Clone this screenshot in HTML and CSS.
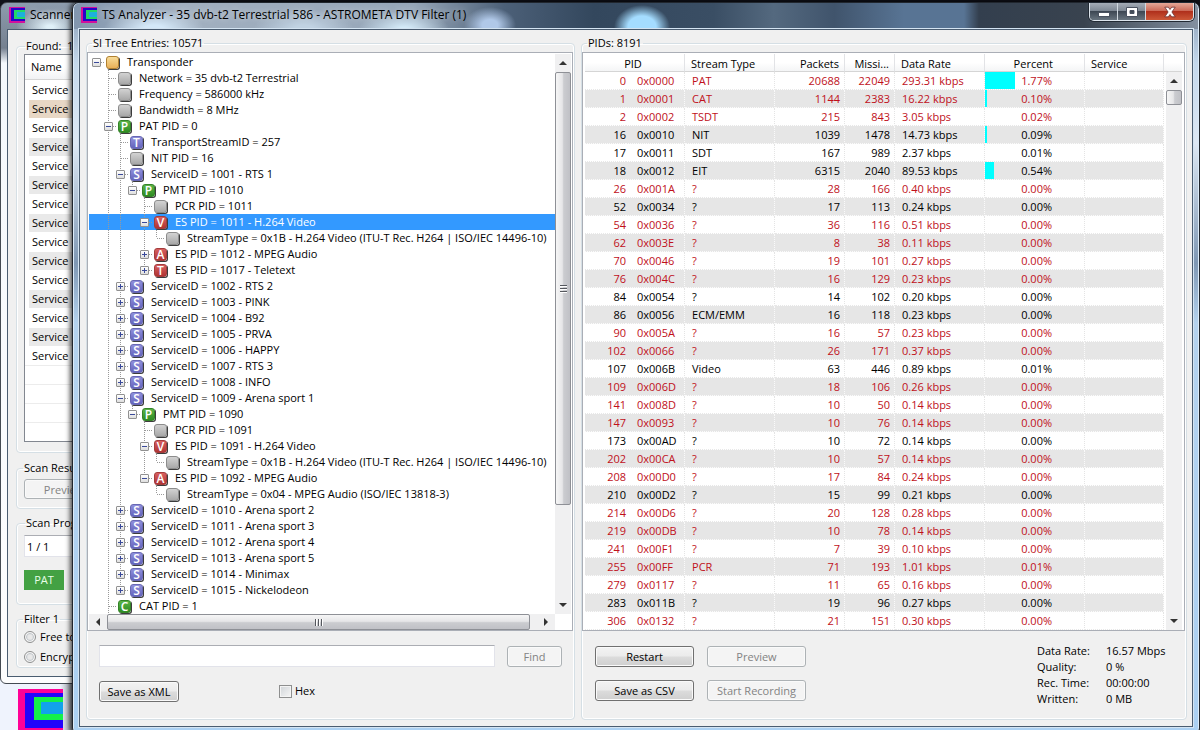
FILE: index.html
```html
<!DOCTYPE html>
<html lang="en">
<head>
<meta charset="utf-8">
<title>TS Analyzer</title>
<link rel="stylesheet" href="styles.css">
</head>
<body>
<div class="desktop">
  <svg class="desk-icon" viewBox="0 0 45 41" aria-hidden="true">
    <rect width="45" height="41" fill="#ff0096"/>
    <rect x="7" y="4" width="38" height="35" fill="#2204fb"/>
    <rect x="16" y="8" width="29" height="23" fill="#14f04a"/>
    <rect x="23" y="13" width="22" height="12" fill="#12a2ea"/>
  </svg>

  <section class="window scanner">
    <header class="titlebar">
      <svg class="app-icon" viewBox="0 0 16 16" aria-hidden="true"><rect width="16" height="16" fill="#d4109c"/><rect x="2" y="1" width="14" height="13" fill="#2408c8"/><rect x="5" y="3" width="11" height="9" fill="#20d868"/><rect x="8" y="5" width="8" height="5" fill="#1cb0dc"/></svg>
      <h2 class="title">Scanner</h2>
    </header>
    <div class="client">
      <fieldset class="group">
        <legend class="indent">Found: &nbsp;1</legend>
        <table class="found">
          <thead><tr><th>Name</th></tr></thead>
          <tbody id="found"></tbody>
        </table>
      </fieldset>
      <fieldset class="group results">
        <legend>Scan Results</legend>
        <button class="btn" disabled>Preview</button>
      </fieldset>
      <fieldset class="group progress">
        <legend class="indent">Scan Progress</legend>
        <input class="text-input" aria-label="Scan progress" value="1 / 1" readonly>
        <span class="pat">PAT</span>
      </fieldset>
      <fieldset class="group filter">
        <legend>Filter 1</legend>
        <label><input type="radio" name="filter">Free to air</label>
        <label><input type="radio" name="filter">Encrypted</label>
      </fieldset>
    </div>
  </section>

  <main class="window analyzer">
    <header class="titlebar">
      <svg class="app-icon" viewBox="0 0 16 16" aria-hidden="true"><rect width="16" height="16" fill="#d4109c"/><rect x="2" y="1" width="14" height="13" fill="#2408c8"/><rect x="5" y="3" width="11" height="9" fill="#20d868"/><rect x="8" y="5" width="8" height="5" fill="#1cb0dc"/></svg>
      <h1 class="title">TS Analyzer - 35 dvb-t2 Terrestrial 586 - ASTROMETA DTV Filter (1)</h1>
      <div class="caption">
        <button class="cap" aria-label="Minimize"><svg viewBox="0 0 12 12"><rect x=".5" y="6.500" width="11" height="4" fill="#fff" stroke="#4a5260"/></svg></button>
        <button class="cap" aria-label="Maximize"><svg viewBox="0 0 12 12"><path d="M.5 1.500h11v9H.5zM4 4.500v3h4v-3z" fill="#fff" fill-rule="evenodd" stroke="#4a5260"/></svg></button>
        <button class="cap close" aria-label="Close"><svg viewBox="0 0 12 12"><path d="M.8 1.200h3.500L6 3.500l1.700-2.300h3.500L7.900 6l3.300 4.800H7.700L6 8.500l-1.700 2.300H.8L4.100 6z" fill="#fff" stroke="#6b3030" stroke-width=".8"/></svg></button>
      </div>
    </header>
    <div class="client panes">
      <fieldset class="group">
        <legend>SI Tree Entries: 10571</legend>
        <div class="box tree-box">
          <div class="tree-main">
            <ul class="tree" id="tree"></ul>
            <div class="hbar">
              <span class="arrow left"></span><span class="thumb"><i class="grip"></i></span><span class="rest"></span><span class="arrow right"></span>
            </div>
          </div>
          <div class="vbar tree-scroll">
            <span class="arrow up"></span><span class="thumb"><i class="grip"></i></span><span class="rest"></span><span class="arrow down"></span>
          </div>
        </div>
        <div class="controls">
          <div class="row">
            <input class="text-input grow" aria-label="Find text">
            <button class="btn find" disabled>Find</button>
          </div>
          <div class="row second">
            <button class="btn save">Save as XML</button>
            <label class="hex"><input type="checkbox">Hex</label>
          </div>
        </div>
      </fieldset>

      <fieldset class="group">
        <legend>PIDs: 8191</legend>
        <div class="box pid-box">
          <table class="pids">
            <colgroup><col class="c-num"><col class="c-hex"><col class="c-type"><col class="c-pack"><col class="c-miss"><col class="c-rate"><col class="c-pct"><col></colgroup>
            <thead><tr><th colspan="2" class="mid">PID</th><th>Stream Type</th><th class="num">Packets</th><th class="num">Missi...</th><th>Data Rate</th><th class="pct">Percent</th><th>Service</th></tr></thead>
            <tbody id="pids"></tbody>
          </table>
          <div class="pid-side">
            <span class="filler"></span>
            <div class="vbar">
              <span class="arrow up"></span><span class="thumb small"></span><span class="rest"></span><span class="arrow down"></span>
            </div>
          </div>
        </div>
        <div class="controls split">
          <div class="buttons">
            <button class="btn">Restart</button>
            <button class="btn" disabled>Preview</button>
            <button class="btn">Save as CSV</button>
            <button class="btn" disabled>Start Recording</button>
          </div>
          <dl class="stats">
            <dt>Data Rate:</dt><dd>16.57 Mbps</dd>
            <dt>Quality:</dt><dd>0 %</dd>
            <dt>Rec. Time:</dt><dd>00:00:00</dd>
            <dt>Written:</dt><dd>0 MB</dd>
          </dl>
        </div>
      </fieldset>
    </div>
  </main>
</div>
<script src="app.js"></script>
</body>
</html>
```
FILE: styles.css
```css
* { box-sizing: border-box; }

body {
  margin: 0;
  font: 11px/16px "Open Sans", "Noto Sans", sans-serif;
  color: #000;
}

button, input { font: inherit; color: inherit; margin: 0; }
h1, h2, ul, dl, dd { margin: 0; padding: 0; }

.desktop {
  position: relative;
  min-height: 100vh;
  overflow: hidden;
  background: linear-gradient(#10121a 0 8px, #66686c 8px);
}
.desktop::before {
  content: "";
  position: absolute;
  left: 0;
  top: 30px;
  bottom: 0;
  width: 76px;
  background: linear-gradient(90deg, #eff3fd 0 60px, #8f949c 73px);
}
.desk-icon { position: absolute; left: 18px; top: 689px; width: 45px; height: 41px; }

/* Windows */
.window {
  position: absolute;
  border: 1px solid #20262e;
  border-radius: 7px 7px 6px 6px;
  padding: 0 6px 6px;
}
.analyzer {
  left: 72px;
  top: 2px;
  right: 0;
  background: linear-gradient(#8498b0, #c4d8ec 60px, #dde8f4 140px, #7f98b4 260px, #b4d2ee 320px, #abd0f2);
  box-shadow: inset 0 0 0 1px #dcebf8, -1px 0 5px 1px rgba(0, 0, 0, .7);
}
.scanner {
  left: 0;
  top: 2px;
  width: 82px;
  overflow: hidden;
  border-color: #444a52;
  background: linear-gradient(#8d9cae, #75808f 45px, #f4f8fc 60px, #fdfdfe);
}

.titlebar { display: flex; align-items: center; height: 26px; margin: 0 -5px; padding: 0 0 2px 5px; }
.analyzer .titlebar {
  border-radius: 6px 6px 0 0;
  background:
    radial-gradient(ellipse 28px 22px at 568px 24px, #a4dcff 50%, transparent),
    radial-gradient(ellipse 26px 18px at 416px 22px, #b0c8e8 30%, transparent),
    radial-gradient(ellipse 45px 18px at 330px 26px, #d4eaf8 10%, transparent),
    radial-gradient(ellipse 50px 20px at 230px 26px, #c0d2e2 20%, transparent),
    radial-gradient(ellipse 50px 20px at 80px 26px, #d4e8f8 20%, transparent),
    linear-gradient(90deg, #8296ae, #a2b0c0 100px, #96a6b8 340px, #4c6078 430px, #33475d 520px, #3a4e64 640px, #54697f 700px, #40546c 760px, #587494 830px, #587494 890px, #333f4e 905px, #39434f 1010px, #8390a0);
}
.scanner .titlebar { background: radial-gradient(ellipse 34px 18px at 48px 24px, #dff0f8 10%, transparent); }
.app-icon { width: 16px; height: 16px; margin: 0 5px 0 2px; }
.title { font-size: 12px; line-height: 20px; font-weight: 400; white-space: nowrap; text-shadow: 0 0 6px rgba(255, 255, 255, .6); }

.caption { display: flex; align-self: flex-start; margin-left: auto; margin-right: 4px; border: 1px solid #dce4ec; border-top: 0; border-radius: 0 0 5px 5px; box-shadow: 0 0 0 1px #222a34; overflow: hidden; }
.cap { width: 28px; height: 17px; padding: 0; border: 0; border-right: 1px solid #d0d8e0; background: linear-gradient(#a4acb6, #7e8894 45%, #3e4854 50%, #68747f); }
.cap svg { display: block; width: 12px; height: 12px; margin: 1px auto 0; }
.cap.close { width: 47px; border: 0; background: linear-gradient(#e4a898, #cc6a58 45%, #b0301c 50%, #cc5838); }

.client { background: #f0f0f0; border: 1px solid #4a5c70; }
.analyzer .client { box-shadow: 0 0 0 1px #d4e4f2; }
.panes { display: grid; grid-template-columns: 489fr 606fr; gap: 6px; padding: 5px 5px 6px 6px; }

.group { min-width: 0; margin: 0; padding: 0; border: 1px solid #d5dfe5; border-radius: 4px; box-shadow: inset 0 0 0 1px #fff; }
legend { height: 16px; padding: 0 1px; margin-left: 5px; white-space: nowrap; }

.box { display: flex; background: #fff; border: 1px solid #aaaeb6; padding: 1px 1px 0; }

/* Tree */
.tree-box { margin-top: 1px; margin-right: 1px; }
.tree-main { flex: 1; min-width: 0; display: flex; flex-direction: column; }
.tree { overflow: hidden; list-style: none; }
.tree li { display: flex; align-items: center; height: 16px; padding-left: 1px; white-space: nowrap; }
.tree li.selected { background: #3399ff; color: #fff; }
.guide { position: relative; flex: none; width: 12px; height: 16px; }
.guide.line, .guide.half { background: repeating-linear-gradient(#999 0 1px, transparent 1px 2px) 6px 0 / 1px 100% no-repeat; }
.guide.half { background-size: 1px 8px; }
.guide.stub::after { content: ""; position: absolute; left: 7px; top: 8px; width: 7px; border-top: 1px dotted #999; }
.toggle {
  position: absolute;
  left: 2px;
  top: 4px;
  z-index: 1;
  width: 9px;
  height: 9px;
  padding: 0;
  border: 1px solid #919191;
  border-radius: 1px;
  background: linear-gradient(#3a4a9a, #3a4a9a) 1px 3px / 5px 1px no-repeat, linear-gradient(#fff, #dedede);
}
.toggle.plus { background: linear-gradient(#3a4a9a, #3a4a9a) 1px 3px / 5px 1px no-repeat, linear-gradient(#3a4a9a, #3a4a9a) 3px 1px / 1px 5px no-repeat, linear-gradient(#fff, #dedede); }
.icon {
  flex: none;
  width: 13px;
  height: 13px;
  margin: 0 8px 0 4px;
  border: 1px solid #8c8c8c;
  border-radius: 3px;
  box-shadow: 1px 1px 0 #3c3c3c;
  background: linear-gradient(#d2d2d2, #a8a8a8);
  color: #fff;
  font-size: 12px;
  font-weight: 600;
  line-height: 11px;
  text-align: center;
}
.icon.root { background: linear-gradient(#f8dc98, #e8b058); border-color: #b08030; }
.icon.p, .icon.c { background: linear-gradient(#5cb448, #2f8c22); border-color: #348428; }
.icon.s, .icon.t { background: linear-gradient(#9090dc, #6464bc); border-color: #6868b4; }
.icon.r { background: linear-gradient(#d86060, #b03434); border-color: #a43c3c; }

/* Scrollbars */
.vbar { display: flex; flex-direction: column; width: 16px; background: #f0f0f1; }
.tree-scroll { margin-bottom: 16px; }
.hbar { display: flex; height: 16px; background: #f0f0f1; }
.thumb { display: flex; align-items: center; justify-content: center; border: 1px solid #8e9096; border-radius: 2px; background: linear-gradient(90deg, #f6f6f6, #e6e6e8 45%, #cbccd0 55%, #c0c1c6); }
.vbar .thumb { flex: 432; }
.vbar .rest { flex: 91; }
.hbar .thumb { flex: 423; background: linear-gradient(#f6f6f6, #e6e6e8 45%, #cbccd0 55%, #c0c1c6); }
.hbar .rest { flex: 7; }
.vbar .thumb.small { flex: none; height: 15px; }
.grip { width: 7px; height: 8px; background: repeating-linear-gradient(#55585e 0 1px, #fff 1px 2px, transparent 2px 3px); }
.hbar .grip { width: 8px; height: 7px; background: repeating-linear-gradient(90deg, #55585e 0 1px, #fff 1px 2px, transparent 2px 3px); }
.arrow { flex: none; display: grid; place-items: center; width: 16px; height: 18px; }
.hbar .arrow { width: 18px; height: 16px; }
.arrow::before { content: ""; border: 4px solid transparent; }
.arrow.up::before { border-top: 0; border-bottom-color: #333; }
.arrow.down::before { border-bottom: 0; border-top-color: #333; }
.arrow.left::before { border-left: 0; border-right-color: #333; }
.arrow.right::before { border-right: 0; border-left-color: #333; }

/* PID table */
.pid-box { margin: 1px 1px 0 0; padding-left: 2px; padding-right: 2px; }
.pids { flex: 1; width: 0; table-layout: fixed; border-collapse: separate; border-spacing: 0; }
.c-num { width: 41px; }
.c-hex { width: 59px; }
.c-type, .c-rate { width: 90px; }
.c-pack { width: 70px; }
.c-miss { width: 50px; }
.c-pct { width: 100px; }
.pids th { height: 18px; padding: 2px 6px 0; font-weight: 400; line-height: 15px; text-align: left; white-space: nowrap; border-right: 1px solid #e2e3e6; border-bottom: 1px solid #d5d5d5; background: linear-gradient(#fff 50%, #f4f5f6); }
.pids th.num { padding-left: 0; padding-right: 5px; text-align: right; }
.pids th.mid { padding-right: 9px; text-align: center; }
.pids th.pct { padding-right: 31px; text-align: right; }
.pids td { height: 18px; padding: 0 7px; line-height: 17px; border-right: 1px dotted #e4e4e4; border-bottom: 1px dotted #e8e8e8; white-space: nowrap; }
.pids tbody tr:nth-child(even) td { background: #e6e6e6; border-color: #fafafa; }
.pids td.dec { padding: 0; text-align: right; border-right: 0; }
.pids td.hexa { padding-left: 11px; padding-right: 0; }
.pids td.num { padding: 0 4px 0 0; text-align: right; }
.pids td.pct { padding: 0 32px 0 0; text-align: right; }
.pids tr.bad { color: #c0101a; }
.bar { float: left; height: 17px; background: #00ffff; }
.pid-side { display: flex; flex-direction: column; width: 18px; padding-left: 2px; }
.filler { height: 18px; margin-left: -2px; border-bottom: 1px solid #d5d5d5; background: linear-gradient(#fff 50%, #f4f5f6); }
.pid-side .vbar { flex: 1; }
.pid-side .rest { flex: 1; }

/* Controls */
.controls { padding: 14px 12px 12px; }
.row { display: flex; gap: 12px; align-items: center; height: 22px; }
.row.second { margin-top: 13px; }
.text-input { height: 22px; padding: 0 4px; border: 1px solid #e2e3ea; border-top-color: #abadb3; background: #fff; }
.grow { flex: 1; min-width: 0; }
.btn { height: 21px; padding: 0 6px; border: 1px solid #707070; border-radius: 3px; background: linear-gradient(#f3f3f3, #ebebeb 48%, #dcdcdc 52%, #cfcfcf); box-shadow: inset 0 0 0 1px #fafafa; white-space: nowrap; line-height: 17px; color: #000; }
.btn:disabled { border-color: #adb2b5; background: #f4f4f4; color: #838383; }
.find { width: 55px; }
.save { width: 80px; }
.hex { display: flex; align-items: center; gap: 3px; margin-left: 88px; }
.hex input { appearance: none; width: 13px; height: 13px; border: 1px solid #8e8f8f; background: linear-gradient(135deg, #d0d4d8, #f6f6f6); box-shadow: inset 0 0 0 1px #f4f4f4; }
.split { display: flex; justify-content: space-between; padding: 15px 0 12px 13px; }
.buttons { display: grid; grid-template-columns: 99px 99px; gap: 13px; align-content: start; }
.stats { display: grid; grid-template-columns: 69px 80px; line-height: 16px; margin-top: -3px; }

/* Scanner contents */
.scanner .client { width: 120px; padding: 8px; }
.scanner .group { padding-left: 7px; }
.scanner legend { margin-left: -1px; }
.scanner legend.indent { margin-left: 1px; }
.found { width: 100%; border-spacing: 0; border: 1px solid #828790; background: #fff; height: 388px; }
.found th { height: 25px; padding: 0 6px; font-weight: 400; text-align: left; border-bottom: 1px solid #d5d5d5; background: linear-gradient(#fff 50%, #f1f2f4); }
.found td { height: 19px; padding: 0 0 0 4px; }
.found td span { display: block; height: 18px; padding-left: 3px; line-height: 18px; }
.found tr:nth-child(even) span { background: #e9e9e9; }
.found tr:nth-child(2) span { background: #e7d7c5; }
.found tr.empty td { border-top: 1px solid #ececec; }
.found tr.empty span { background: none; }
.scanner .group:first-child { padding-bottom: 10px; }
.scanner .results { margin-top: 7px; padding-top: 3px; padding-bottom: 9px; }
.scanner .progress { margin-top: 6px; padding-top: 4px; padding-bottom: 14px; }
.scanner .progress .text-input { display: block; width: 90px; padding-left: 2px; }
.results .btn { display: block; width: 80px; height: 20px; }
.pat { display: block; width: 40px; height: 20px; margin-top: 13px; line-height: 20px; text-align: center; color: #e8ffe8; background: #43a143; }
.scanner .filter { margin-top: 6px; padding-top: 0; }
.filter label { display: flex; align-items: center; gap: 4px; height: 20px; white-space: nowrap; }
.filter input { appearance: none; flex: none; width: 12px; height: 12px; border: 1px solid #8e8f8f; border-radius: 50%; background: radial-gradient(#e8e8e8 30%, #c8ccd0 50%, #f4f4f4 60%); }
```
FILE: app.js
```js
// Tree entries: depth | toggle (+, - or .) | icon letter | label
const tree = `0|-|.|Transponder
1|.||Network = 35 dvb-t2 Terrestrial
1|.||Frequency = 586000 kHz
1|.||Bandwidth = 8 MHz
1|-|P|PAT PID = 0
2|.|T|TransportStreamID = 257
2|.||NIT PID = 16
2|-|S|ServiceID = 1001 - RTS 1
3|-|P|PMT PID = 1010
4|.||PCR PID = 1011
4|-|V|ES PID = 1011 - H.264 Video
5|.||StreamType = 0x1B - H.264 Video (ITU-T Rec. H264 | ISO/IEC 14496-10)
4|+|A|ES PID = 1012 - MPEG Audio
4|+|T|ES PID = 1017 - Teletext
2|+|S|ServiceID = 1002 - RTS 2
2|+|S|ServiceID = 1003 - PINK
2|+|S|ServiceID = 1004 - B92
2|+|S|ServiceID = 1005 - PRVA
2|+|S|ServiceID = 1006 - HAPPY
2|+|S|ServiceID = 1007 - RTS 3
2|+|S|ServiceID = 1008 - INFO
2|-|S|ServiceID = 1009 - Arena sport 1
3|-|P|PMT PID = 1090
4|.||PCR PID = 1091
4|-|V|ES PID = 1091 - H.264 Video
5|.||StreamType = 0x1B - H.264 Video (ITU-T Rec. H264 | ISO/IEC 14496-10)
4|-|A|ES PID = 1092 - MPEG Audio
5|.||StreamType = 0x04 - MPEG Audio (ISO/IEC 13818-3)
2|+|S|ServiceID = 1010 - Arena sport 2
2|+|S|ServiceID = 1011 - Arena sport 3
2|+|S|ServiceID = 1012 - Arena sport 4
2|+|S|ServiceID = 1013 - Arena sport 5
2|+|S|ServiceID = 1014 - Minimax
2|+|S|ServiceID = 1015 - Nickelodeon
1|.|C|CAT PID = 1`.split("\n").map(line => {
  const [depth, toggle, letter, ...label] = line.split("|");
  return { depth: +depth, toggle, letter, label: label.join("|") };
});
const selectedRow = 10;

// True when a later sibling exists at the given depth.
function continues(index, depth) {
  if (depth === 1) return true;
  for (let i = index + 1; i < tree.length; i++) {
    if (tree[i].depth < depth) return false;
    if (tree[i].depth === depth) return true;
  }
  return false;
}

function iconClass({ letter, depth }) {
  if (letter === ".") return "root";
  if (letter === "V" || letter === "A" || (letter === "T" && depth === 4)) return "r";
  return letter.toLowerCase();
}

document.getElementById("tree").innerHTML = tree.map((row, i) => {
  let guides = "";
  for (let d = 0; d <= row.depth; d++) {
    const own = d === row.depth;
    let cls = "guide";
    if (d > 0 && continues(i, d)) cls += " line";
    else if (d > 0 && own) cls += " half";
    if (own) cls += " stub";
    const toggle = own && row.toggle !== "."
      ? `<button class="toggle${row.toggle === "+" ? " plus" : ""}" aria-label="Toggle ${row.label}"></button>` : "";
    guides += `<span class="${cls}">${toggle}</span>`;
  }
  const letter = row.letter === "." ? "" : row.letter;
  return `<li class="${i === selectedRow ? "selected" : ""}">${guides}<span class="icon ${iconClass(row)}">${letter}</span>${row.label}</li>`;
}).join("");

// PIDs: "!" marks a faulty stream | pid | type | packets | missing | kbps | percent
const pids = `!0|PAT|20688|22049|293.31|1.77
!1|CAT|1144|2383|16.22|0.10
!2|TSDT|215|843|3.05|0.02
16|NIT|1039|1478|14.73|0.09
17|SDT|167|989|2.37|0.01
18|EIT|6315|2040|89.53|0.54
!26|?|28|166|0.40|0.00
52|?|17|113|0.24|0.00
!54|?|36|116|0.51|0.00
!62|?|8|38|0.11|0.00
!70|?|19|101|0.27|0.00
!76|?|16|129|0.23|0.00
84|?|14|102|0.20|0.00
86|ECM/EMM|16|118|0.23|0.00
!90|?|16|57|0.23|0.00
!102|?|26|171|0.37|0.00
107|Video|63|446|0.89|0.01
!109|?|18|106|0.26|0.00
!141|?|10|50|0.14|0.00
!147|?|10|76|0.14|0.00
173|?|10|72|0.14|0.00
!202|?|10|57|0.14|0.00
!208|?|17|84|0.24|0.00
210|?|15|99|0.21|0.00
!214|?|20|128|0.28|0.00
!219|?|10|78|0.14|0.00
!241|?|7|39|0.10|0.00
!255|PCR|71|193|1.01|0.01
!279|?|11|65|0.16|0.00
283|?|19|96|0.27|0.00
!306|?|21|151|0.30|0.00`.split("\n");

document.getElementById("pids").innerHTML = pids.map(line => {
  const bad = line[0] === "!";
  const [pid, type, packets, missing, rate, percent] = line.replace("!", "").split("|");
  const hex = "0x" + (+pid).toString(16).toUpperCase().padStart(4, "0");
  const width = Math.round(percent * 17);
  const bar = width ? `<span class="bar" style="width:${width}px"></span>` : "";
  return `<tr class="${bad ? "bad" : ""}"><td class="dec">${pid}</td><td class="hexa">${hex}</td><td>${type}</td>` +
    `<td class="num">${packets}</td><td class="num">${missing}</td><td>${rate} kbps</td>` +
    `<td class="pct">${bar}${percent}%</td><td></td></tr>`;
}).join("");

document.getElementById("found").innerHTML =
  "<tr><td><span>Service</span></td></tr>".repeat(15) +
  "<tr class=\"empty\"><td><span></span></td></tr>".repeat(4);
```
